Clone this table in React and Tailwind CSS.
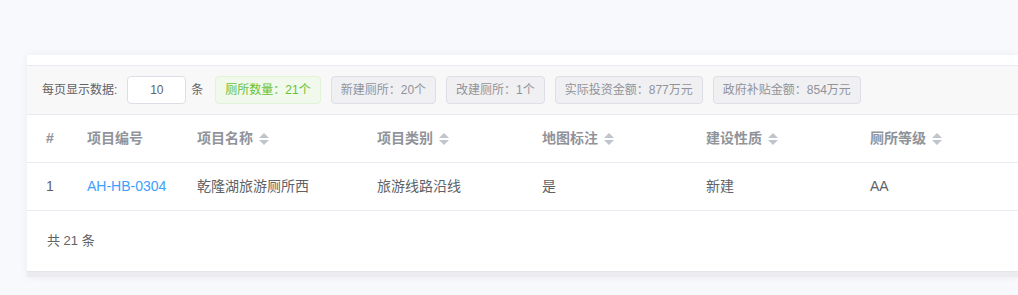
import React from "react";

const font = { fontFamily: '"Liberation Sans", "Noto Sans CJK SC", sans-serif' };

function SortIcon() {
  return (
    <span className="ml-[6px] inline-flex flex-col items-center justify-center gap-[2px]">
      <svg width="10" height="5" viewBox="0 0 10 5"><path d="M0 5 L5 0 L10 5 Z" fill="#c0c4cc" /></svg>
      <svg width="10" height="5" viewBox="0 0 10 5"><path d="M0 0 L5 5 L10 0 Z" fill="#c0c4cc" /></svg>
    </span>
  );
}

const cols = "grid grid-cols-[41px_110px_180px_165px_164px_164px_1fr] pl-[19px]";

export default function App() {
  const heads = [
    ["#", false],
    ["项目编号", false],
    ["项目名称", true],
    ["项目类别", true],
    ["地图标注", true],
    ["建设性质", true],
    ["厕所等级", true],
  ];
  const tags = ["新建厕所：20个", "改建厕所：1个", "实际投资金额：877万元", "政府补贴金额：854万元"];
  return (
    <div className="w-[1018px] h-[295px] bg-[#f8f9fc] overflow-hidden pt-[55px] pl-[27px]" style={font}>
      <div className="bg-white shadow-[0_0_8px_rgba(0,0,0,0.06)] w-[991px]">
        <div className="h-[10px]" />
        <div className="h-[50px] bg-[#f8f8f8] border-t border-b border-[#e8eaf2] flex items-center pl-[15px] text-[12px]">
          <span className="text-[#606266]">每页显示数据:</span>
          <div className="ml-[10px] w-[59px] h-[28px] border border-[#dcdfe6] rounded-[4px] bg-white flex items-center justify-center text-[#606266] text-[12px]">10</div>
          <span className="ml-[5px] text-[#606266]">条</span>
          <div className="ml-[12px] h-[28px] px-[9px] flex items-center rounded-[4px] bg-[#f0f9eb] border border-[#e1f3d8] text-[#67c23a]">厕所数量：21个</div>
          {tags.map((t) => (
            <div key={t} className="ml-[10px] h-[28px] px-[9px] flex items-center rounded-[4px] bg-[#f0f0f3] border border-[#dcdfe6] text-[#909399]">{t}</div>
          ))}
        </div>
        <div className={`${cols} h-[48px] items-center border-b border-[#e8eaf2] text-[14px] font-bold text-[#909399]`}>
          {heads.map(([h, s]) => (
            <div key={h} className="flex items-center">
              <span>{h}</span>
              {s && <SortIcon />}
            </div>
          ))}
        </div>
        <div className={`${cols} h-[48px] items-center border-b border-[#e8eaf2] text-[14px] text-[#606266]`}>
          <div>1</div>
          <div className="text-[#409eff]">AH-HB-0304</div>
          <div>乾隆湖旅游厕所西</div>
          <div>旅游线路沿线</div>
          <div>是</div>
          <div>新建</div>
          <div>AA</div>
        </div>
        <div className="h-[60px] flex items-center pl-[20px] text-[13px] text-[#606266]">共 21 条</div>
        <div className="h-[6px] bg-[#ececf0] border-t border-[#e4e4ea]" />
      </div>
    </div>
  );
}
